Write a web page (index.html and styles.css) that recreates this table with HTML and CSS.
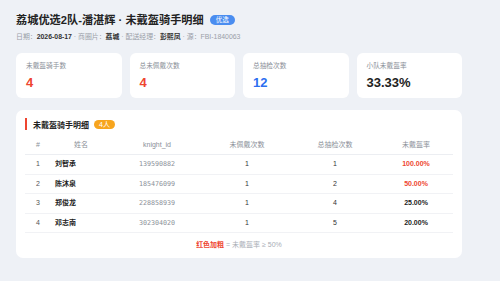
FILE: index.html
```html
<!DOCTYPE html>
<html lang="zh-CN">
<head>
    <meta charset="UTF-8">
    <meta name="viewport" content="width=device-width, initial-scale=1.0">
    <title>未戴盔骑手明细</title>
    <link rel="stylesheet" href="styles.css">
</head>
<body>
    <div class="page">
        <div class="title-row">
            <h1>荔城优选2队-潘湛辉 · 未戴盔骑手明细</h1>
            <span class="tag">优选</span>
        </div>
        <div class="meta">
            日期：<b>2026-08-17</b> · 商圈片：<b>荔城</b> · 配送经理：<b>彭熙凤</b> · 源：FBI-1840063
        </div>

        <div class="stats">
            <div class="stat">
                <div class="stat-label">未戴盔骑手数</div>
                <div class="stat-value red">4</div>
            </div>
            <div class="stat">
                <div class="stat-label">总未佩戴次数</div>
                <div class="stat-value red">4</div>
            </div>
            <div class="stat">
                <div class="stat-label">总抽检次数</div>
                <div class="stat-value blue">12</div>
            </div>
            <div class="stat">
                <div class="stat-label">小队未戴盔率</div>
                <div class="stat-value">33.33%</div>
            </div>
        </div>

        <div class="panel">
            <div class="panel-head">
                <span class="panel-title">未戴盔骑手明细</span>
                <span class="count">4人</span>
            </div>
            <table>
                <colgroup>
                    <col style="width: 26px">
                    <col style="width: 60px">
                    <col style="width: 92px">
                    <col style="width: 88px">
                    <col style="width: 88px">
                    <col style="width: 74px">
                </colgroup>
                <thead>
                    <tr>
                        <th>#</th>
                        <th>姓名</th>
                        <th>knight_id</th>
                        <th>未佩戴次数</th>
                        <th>总抽检次数</th>
                        <th>未戴盔率</th>
                    </tr>
                </thead>
                <tbody>
                    <tr>
                        <td class="muted">1</td>
                        <td class="name">刘智承</td>
                        <td class="kid">139590882</td>
                        <td>1</td>
                        <td>1</td>
                        <td class="rate hot">100.00%</td>
                    </tr>
                    <tr>
                        <td class="muted">2</td>
                        <td class="name">陈沐泉</td>
                        <td class="kid">185476099</td>
                        <td>1</td>
                        <td>2</td>
                        <td class="rate hot">50.00%</td>
                    </tr>
                    <tr>
                        <td class="muted">3</td>
                        <td class="name">郑俊龙</td>
                        <td class="kid">228858939</td>
                        <td>1</td>
                        <td>4</td>
                        <td class="rate">25.00%</td>
                    </tr>
                    <tr>
                        <td class="muted">4</td>
                        <td class="name">邓志南</td>
                        <td class="kid">302304020</td>
                        <td>1</td>
                        <td>5</td>
                        <td class="rate">20.00%</td>
                    </tr>
                </tbody>
            </table>
            <div class="note"><b>红色加粗</b> = 未戴盔率 ≥ 50%</div>
        </div>
    </div>
</body>
</html>
```

FILE: styles.css
```css
body {
    margin: 0;
    background-color: #eef1f6;
    font-family: "Liberation Sans", "Noto Sans CJK SC", sans-serif;
    color: #222;
}

.page {
    width: 446px;
    padding: 12px 16px;
}

.title-row {
    display: flex;
    align-items: center;
    gap: 6px;
    height: 16px;
}

h1 {
    margin: 0;
    font-size: 11.2px;
    line-height: 16px;
    font-weight: bold;
    color: #222;
}

.tag {
    background-color: #4a8df0;
    color: #fff;
    font-size: 6.5px;
    line-height: 10px;
    padding: 0 6px;
    border-radius: 6px;
}

.meta {
    margin-top: 4px;
    font-size: 6.9px;
    line-height: 10px;
    color: #9aa0a8;
}

.meta b {
    color: #333;
}

.stats {
    display: grid;
    grid-template-columns: repeat(4, 1fr);
    gap: 8px;
    margin-top: 11px;
}

.stat {
    background-color: #fff;
    border-radius: 6px;
    padding: 8px 10px 6px;
    height: 31px;
}

.stat-label {
    font-size: 6.7px;
    line-height: 10px;
    color: #8a8f98;
}

.stat-value {
    margin-top: 4px;
    font-size: 13px;
    line-height: 16px;
    font-weight: bold;
    color: #222;
}

.stat-value.red {
    color: #ee4530;
}

.stat-value.blue {
    color: #2d6ff0;
}

.panel {
    margin-top: 12px;
    background-color: #fff;
    border-radius: 7px;
    padding: 8px 9px 8px;
}

.panel-head {
    display: flex;
    align-items: center;
    gap: 5px;
    height: 12px;
    border-left: 2px solid #ee4530;
    padding-left: 6px;
}

.panel-title {
    font-size: 8px;
    font-weight: bold;
    color: #222;
}

.count {
    background-color: #f7a51e;
    color: #fff;
    font-size: 7px;
    line-height: 9px;
    padding: 0 5px;
    border-radius: 5px;
}

table {
    width: 428px;
    margin-top: 4px;
    border-collapse: collapse;
    table-layout: fixed;
}

th {
    font-size: 7px;
    font-weight: normal;
    color: #8a8f98;
    height: 20px;
    padding: 0;
    text-align: center;
    border-bottom: 1px solid #eceef2;
}

td {
    font-size: 7px;
    line-height: 18.5px;
    padding: 0;
    text-align: center;
    color: #333;
    border-bottom: 1px solid #f1f2f5;
}

td.muted {
    color: #555;
}

td.name {
    text-align: left;
    padding-left: 4px;
    font-weight: bold;
    color: #222;
}

td.kid {
    font-family: "DejaVu Sans Mono", monospace;
    font-size: 6.7px;
    color: #8a8f98;
}

td.rate {
    font-weight: bold;
    color: #222;
}

td.rate.hot {
    color: #ee4530;
}

.note {
    margin-top: 7px;
    text-align: center;
    font-size: 7px;
    line-height: 10px;
    color: #a8adb5;
}

.note b {
    color: #ee4530;
}
```
